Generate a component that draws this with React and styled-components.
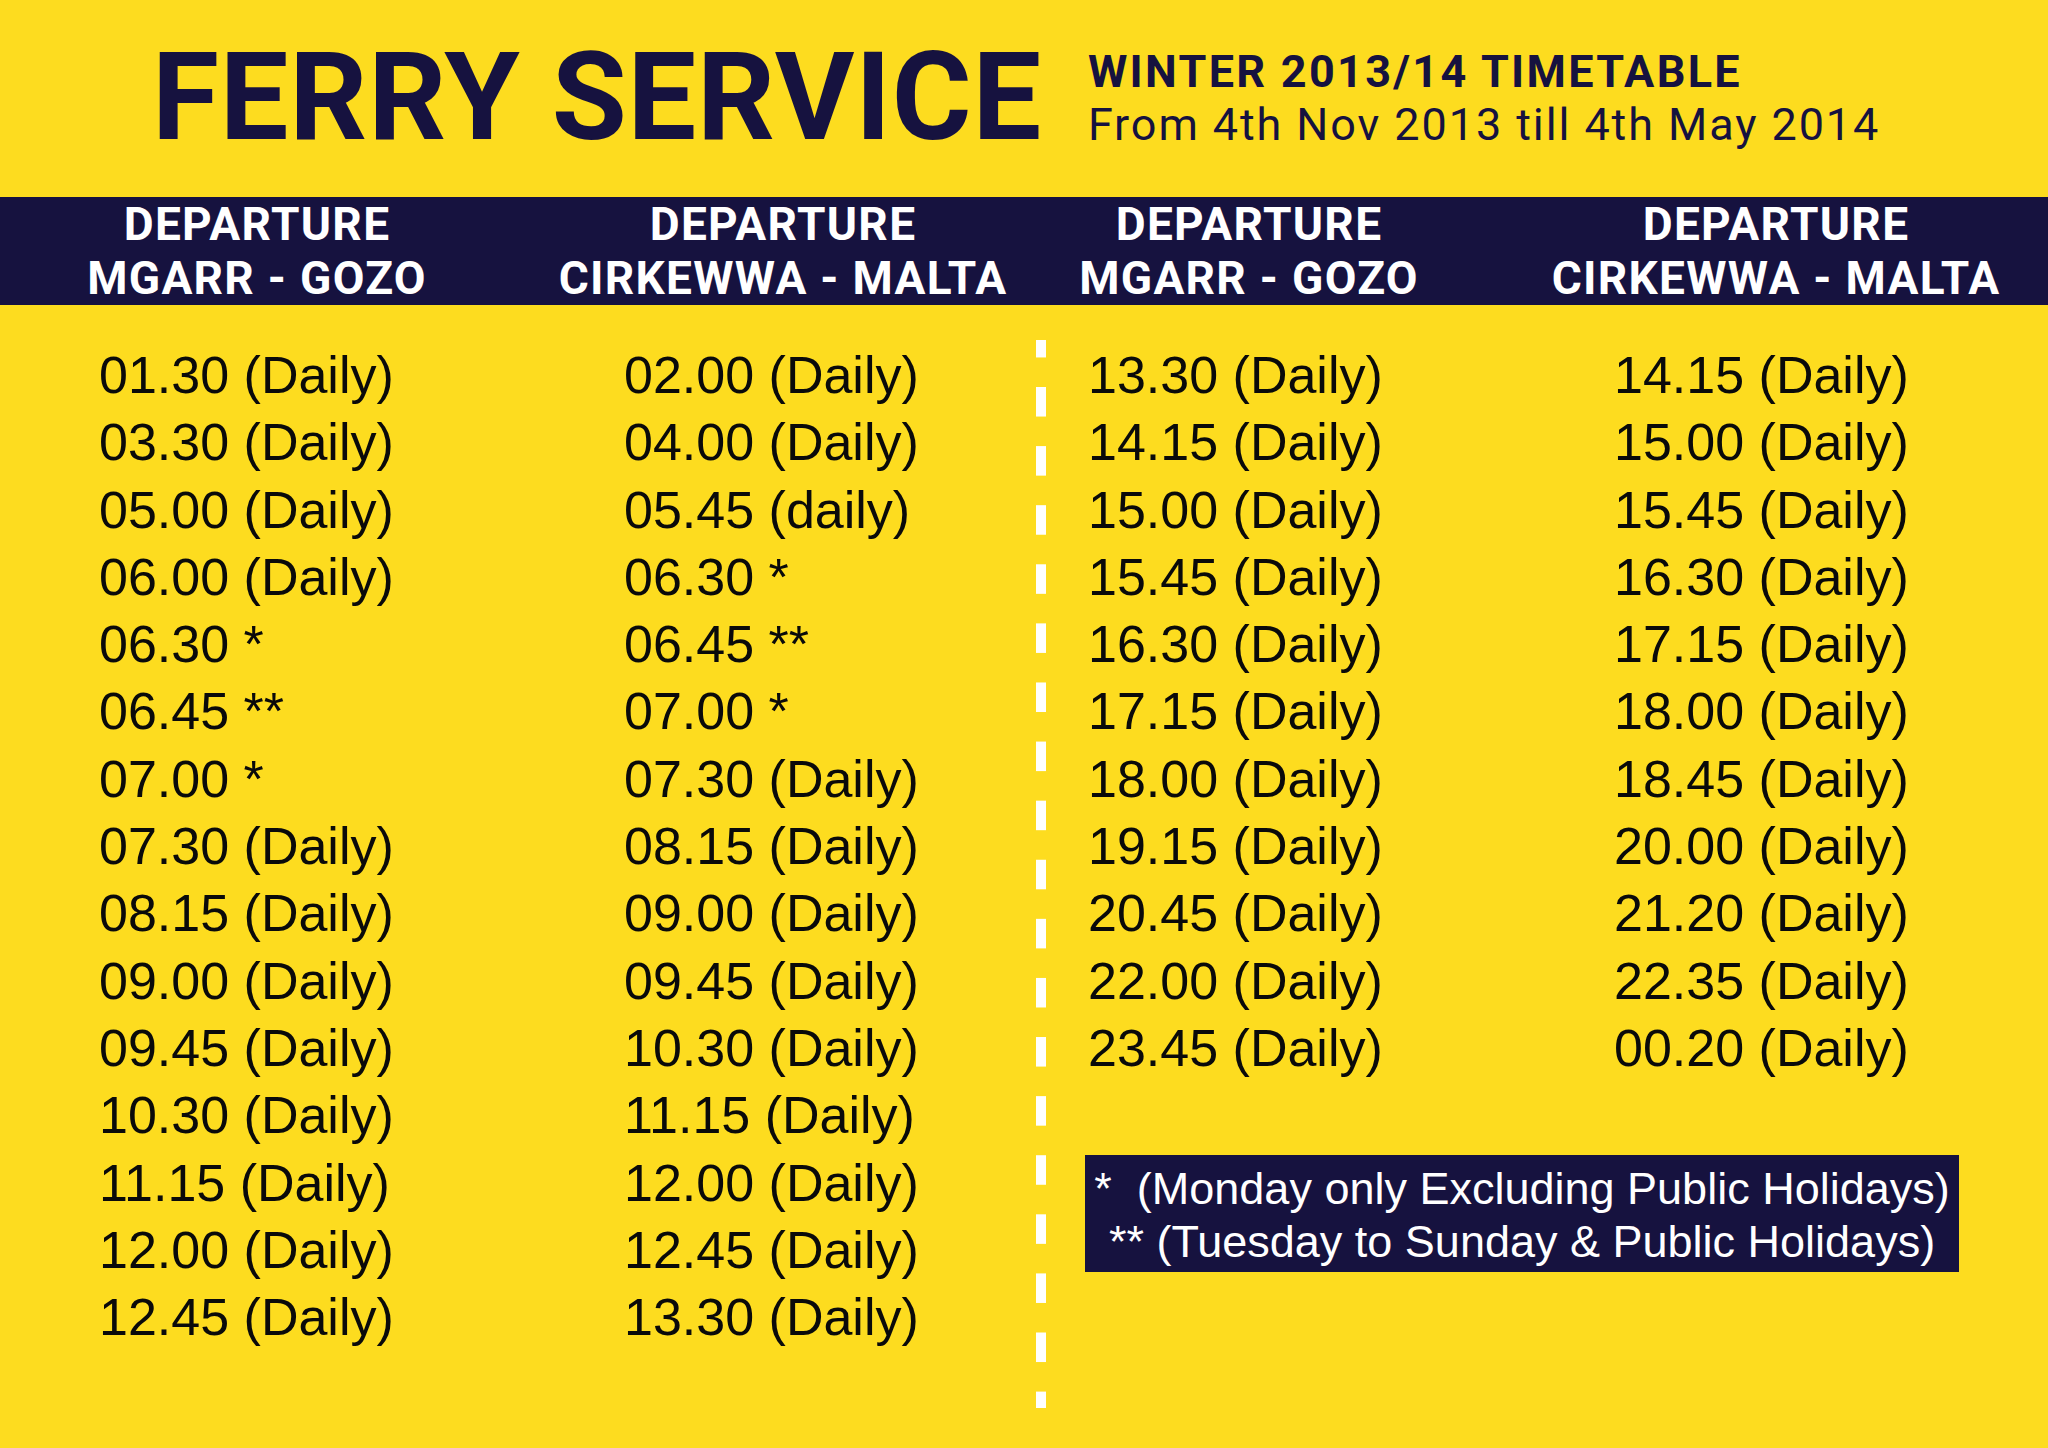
import React from "react";
import styled, { createGlobalStyle } from "styled-components";

const YELLOW = "#fddc1f";
const NAVY = "#16123f";

const GlobalStyle = createGlobalStyle`
  html, body {
    margin: 0;
    padding: 0;
    background: ${YELLOW};
  }
  * {
    box-sizing: border-box;
  }
`;

const Page = styled.div`
  width: 2048px;
  height: 1448px;
  background: ${YELLOW};
  overflow: hidden;
`;

const TopBar = styled.header`
  display: flex;
  align-items: flex-start;
  height: 197px;
  padding-left: 152px;
`;

const Title = styled.h1`
  margin: 37px 0 0;
  font-family: Roboto, "Liberation Sans", sans-serif;
  font-weight: 700;
  font-size: 122px;
  line-height: 122px;
  color: ${NAVY};
  letter-spacing: 0.8px;
`;

const Season = styled.div`
  margin: 45px 0 0 46px;
  font-family: Roboto, "Liberation Sans", sans-serif;
  font-size: 45px;
  line-height: 53px;
  color: ${NAVY};
`;

const SeasonLine = styled.div`
  font-weight: ${(p) => (p.$bold ? 700 : 400)};
  letter-spacing: ${(p) => (p.$bold ? 2.3 : 1.9)}px;
  white-space: nowrap;
`;

const Table = styled.div`
  display: grid;
  grid-template-columns: 514px 522px 10px 406px 596px;
`;

const HeadCell = styled.div`
  background: ${NAVY};
  height: 108px;
  padding-left: ${(p) => p.$shift || 0}px;
  font-family: Roboto, "Liberation Sans", sans-serif;
  font-weight: 700;
  font-size: 46px;
  line-height: 54px;
  letter-spacing: 1.3px;
  color: #fff;
  text-align: center;
  white-space: nowrap;
`;

const TimeList = styled.ul`
  list-style: none;
  margin: 0;
  padding: 37px 0 0 ${(p) => p.$indent}px;
  font-family: "Liberation Sans", Arial, sans-serif;
  font-size: 52px;
  line-height: 67.3px;
  color: #0a0a0a;
`;

const TimeRow = styled.li`
  white-space: nowrap;
`;

const Divider = styled.div`
  margin-top: 35px;
  width: 10px;
  height: 1068px;
  background: linear-gradient(#fff 0 50%, transparent 50%) 0 47px / 100% 59.1px repeat-y;
`;

const RightPane = styled.div`
  grid-column: 4 / 6;
  display: grid;
  grid-template-columns: 406px 596px;
  align-content: start;
`;

const Footnote = styled.div`
  grid-column: 1 / 3;
  margin: 73px 0 0 39px;
  width: 874px;
  padding: 7px 0 4px;
  background: ${NAVY};
  color: #fff;
  font-family: "Liberation Sans", Arial, sans-serif;
  font-size: 45px;
  line-height: 53px;
  text-align: center;
  white-space: pre;
`;

const mgarrMorning = [
  "01.30 (Daily)", "03.30 (Daily)", "05.00 (Daily)", "06.00 (Daily)",
  "06.30 *", "06.45 **", "07.00 *", "07.30 (Daily)", "08.15 (Daily)",
  "09.00 (Daily)", "09.45 (Daily)", "10.30 (Daily)", "11.15 (Daily)",
  "12.00 (Daily)", "12.45 (Daily)",
];

const cirkewwaMorning = [
  "02.00 (Daily)", "04.00 (Daily)", "05.45 (daily)", "06.30 *",
  "06.45 **", "07.00 *", "07.30 (Daily)", "08.15 (Daily)", "09.00 (Daily)",
  "09.45 (Daily)", "10.30 (Daily)", "11.15 (Daily)", "12.00 (Daily)",
  "12.45 (Daily)", "13.30 (Daily)",
];

const mgarrAfternoon = [
  "13.30 (Daily)", "14.15 (Daily)", "15.00 (Daily)", "15.45 (Daily)",
  "16.30 (Daily)", "17.15 (Daily)", "18.00 (Daily)", "19.15 (Daily)",
  "20.45 (Daily)", "22.00 (Daily)", "23.45 (Daily)",
];

const cirkewwaAfternoon = [
  "14.15 (Daily)", "15.00 (Daily)", "15.45 (Daily)", "16.30 (Daily)",
  "17.15 (Daily)", "18.00 (Daily)", "18.45 (Daily)", "20.00 (Daily)",
  "21.20 (Daily)", "22.35 (Daily)", "00.20 (Daily)",
];

function Times({ items, indent }) {
  return (
    <TimeList $indent={indent}>
      {items.map((t) => (
        <TimeRow key={t}>{t}</TimeRow>
      ))}
    </TimeList>
  );
}

function Head({ place, shift }) {
  return (
    <HeadCell $shift={shift}>
      DEPARTURE
      <br />
      {place}
    </HeadCell>
  );
}

export default function App() {
  return (
    <Page>
      <GlobalStyle />
      <TopBar>
        <Title>FERRY SERVICE</Title>
        <Season>
          <SeasonLine $bold>WINTER 2013/14 TIMETABLE</SeasonLine>
          <SeasonLine>From 4th Nov 2013 till 4th May 2014</SeasonLine>
        </Season>
      </TopBar>

      <Table>
        <Head place="MGARR - GOZO" />
        <Head place="CIRKEWWA - MALTA" shift={16} />
        <HeadCell />
        <Head place="MGARR - GOZO" />
        <Head place="CIRKEWWA - MALTA" shift={52} />

        <Times items={mgarrMorning} indent={99} />
        <Times items={cirkewwaMorning} indent={110} />
        <Divider />
        <RightPane>
          <Times items={mgarrAfternoon} indent={42} />
          <Times items={cirkewwaAfternoon} indent={162} />
          <Footnote>
            {"*  (Monday only Excluding Public Holidays)\n** (Tuesday to Sunday & Public Holidays)"}
          </Footnote>
        </RightPane>
      </Table>
    </Page>
  );
}
